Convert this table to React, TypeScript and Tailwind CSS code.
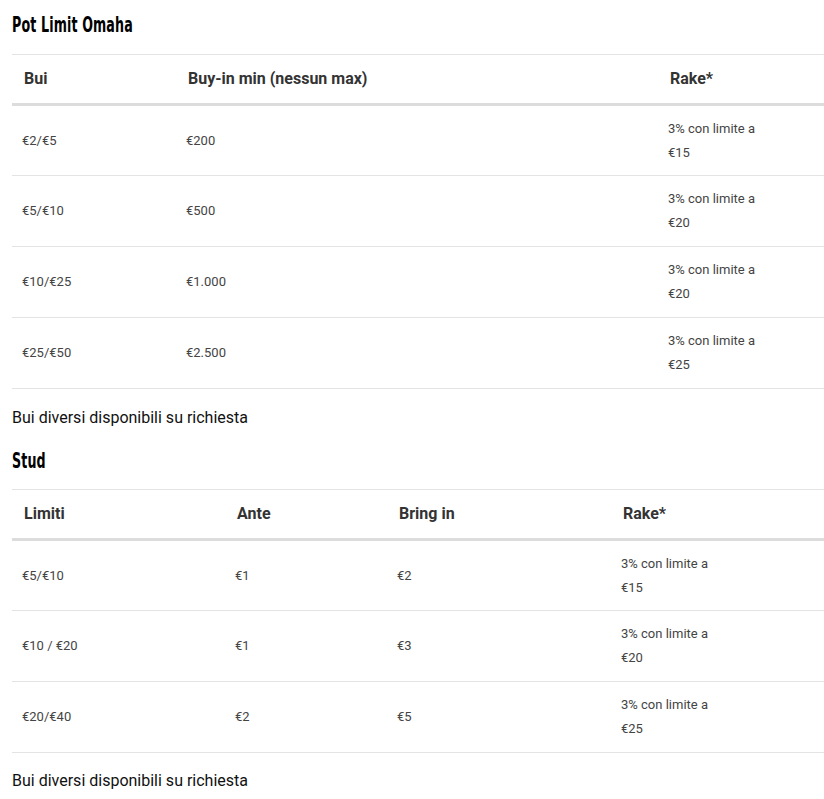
import React from "react";

const headFont = { fontFamily: '"DejaVu Sans Condensed", "Liberation Sans Narrow", "Roboto", sans-serif' };

function Rake({ v }: { v: string }) {
  return (
    <div className="leading-6">
      <div>3% con limite a</div>
      <div>{v}</div>
    </div>
  );
}

type Row = React.ReactNode[];

function Table({ headers, widths, rows }: { headers: string[]; widths: string[]; rows: Row[] }) {
  return (
    <table className="w-[812px] table-fixed border-collapse ml-3">
      <colgroup>
        {widths.map((w, i) => (
          <col key={i} className={w} />
        ))}
      </colgroup>
      <thead>
        <tr className="border-t border-[#e3e3e3] border-b-[3px] border-b-[#dcdcdc]">
          {headers.map((h, i) => (
            <th key={i} className="text-left font-bold text-[16px] text-[#333] h-[50px] pl-3 pr-2 align-middle">
              {h}
            </th>
          ))}
        </tr>
      </thead>
      <tbody>
        {rows.map((r, i) => (
          <tr key={i} className="border-b border-[#e3e3e3]">
            {r.map((c, j) => (
              <td key={j} className="text-[13px] text-[#444] h-[71px] pl-[10px] pr-2 align-middle">
                {c}
              </td>
            ))}
          </tr>
        ))}
      </tbody>
    </table>
  );
}

function Heading({ children, className }: { children: React.ReactNode; className: string }) {
  return (
    <h2 className={"pl-3 " + className}>
      <span
        className="inline-block text-[21px] font-bold text-black leading-7 scale-x-[0.67] origin-left tracking-[0.2px]"
        style={headFont}
      >
        {children}
      </span>
    </h2>
  );
}

export default function App() {
  return (
    <div className="bg-white w-[824px] h-[799px] overflow-hidden" style={{ fontFamily: 'Roboto, "Liberation Sans", sans-serif' }}>
      <Heading className="pt-[11px] h-[54px]">Pot Limit Omaha</Heading>
      <Table
        headers={["Bui", "Buy-in min (nessun max)", "Rake*"]}
        widths={["w-[164px]", "w-[482px]", "w-[166px]"]}
        rows={[
          ["€2/€5", "€200", <Rake v="€15" />],
          ["€5/€10", "€500", <Rake v="€20" />],
          ["€10/€25", "€1.000", <Rake v="€20" />],
          ["€25/€50", "€2.500", <Rake v="€25" />],
        ]}
      />
      <p className="pl-3 text-[16px] text-[#111] mt-[17px] leading-6">Bui diversi disponibili su richiesta</p>
      <Heading className="mt-[17px] h-[42px]">Stud</Heading>
      <Table
        headers={["Limiti", "Ante", "Bring in", "Rake*"]}
        widths={["w-[213px]", "w-[162px]", "w-[224px]", "w-[213px]"]}
        rows={[
          ["€5/€10", "€1", "€2", <Rake v="€15" />],
          ["€10 / €20", "€1", "€3", <Rake v="€20" />],
          ["€20/€40", "€2", "€5", <Rake v="€25" />],
        ]}
      />
      <p className="pl-3 text-[16px] text-[#111] mt-[16px] leading-6">Bui diversi disponibili su richiesta</p>
    </div>
  );
}
